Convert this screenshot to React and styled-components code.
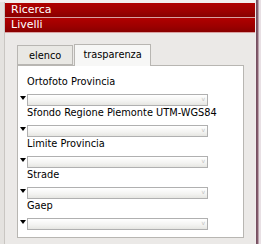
import React from 'react'
import styled, { createGlobalStyle } from 'styled-components'

const Global = createGlobalStyle`
  body {
    margin: 0;
    background: #f2eeee;
    font-family: "DejaVu Sans", Verdana, sans-serif;
  }
`

const Frame = styled.div`
  width: 261px;
  height: 244px;
  display: flex;
  overflow: hidden;
`

const Side = styled.div`
  width: 5px;
  background: #e4e2df;
  border-right: 1px solid #c9c6c2;
  box-sizing: border-box;
  margin-top: 2px;
`

const Panel = styled.div`
  width: 250px;
  display: flex;
  flex-direction: column;
  padding-top: 3px;
`

const Bar = styled.div`
  height: 14px;
  line-height: 14px;
  padding-left: 6px;
  color: #fff;
  font-size: 11px;
  background: linear-gradient(#b00000, #9c0000 60%, #880000);
  border-bottom: 1px solid #d9a0a0;
  &:last-of-type { height: 13px; line-height: 13px; }
`

const Content = styled.div`
  flex: 1;
  background: #ebe9e7;
  padding: 11px 11px 0 12px;
`

const Tabs = styled.div`
  display: flex;
  align-items: flex-end;
  height: 21px;
  gap: 1px;
`

const Tab = styled.div`
  box-sizing: border-box;
  height: ${p => (p.active ? '22px' : '20px')};
  padding: 0 ${p => (p.active ? '8px' : '11px')};
  line-height: ${p => (p.active ? '20px' : '19px')};
  font-size: 9.8px;
  color: #000;
  background: ${p => (p.active ? '#f7f7f6' : '#e9e8e4')};
  border: 1px solid #b8b6b2;
  border-bottom: ${p => (p.active ? 'none' : '1px solid #b8b6b2')};
  margin-bottom: ${p => (p.active ? '-1px' : '0')};
  position: relative;
`

const Body = styled.div`
  background: #fff;
  border: 1px solid #b8b6b2;
  height: 173px;
  box-sizing: border-box;
  padding: 9px 0 0 2px;
`

const Item = styled.div`
  height: 31px;
`

const Label = styled.div`
  font-size: 9.8px;
  color: #000;
  padding-left: 7px;
  height: 19px;
  line-height: 14px;
`

const Row = styled.div`
  display: flex;
  align-items: center;
`

const Arrow = styled.div`
  width: 0;
  height: 0;
  border-left: 3px solid transparent;
  border-right: 3px solid transparent;
  border-top: 4px solid #000;
  margin-right: 1px;
  margin-top: -4px;
`

const Track = styled.div`
  width: 181px;
  height: 12px;
  box-sizing: border-box;
  border: 1px solid #b0b0b0;
  background: linear-gradient(#ffffff, #f3f3f1 60%, #e6e6e2);
  position: relative;
`

const Knob = styled.span`
  position: absolute;
  right: 2px;
  top: 1px;
  font-size: 6px;
  color: #c0c0c0;
  line-height: 6px;
`

const Strip = styled.div`
  width: 6px;
  background: linear-gradient(90deg, #f0ecec 0, #f0ecec 1px, #6e4a5c 1px, #8a6070 3px, #e8e0e4 4px);
`

const layers = [
  'Ortofoto Provincia',
  'Sfondo Regione Piemonte UTM-WGS84',
  'Limite Provincia',
  'Strade',
  'Gaep',
]

export default function App() {
  return (
    <>
      <Global />
      <Frame>
        <Side />
        <Panel>
          <Bar>Ricerca</Bar>
          <Bar>Livelli</Bar>
          <Content>
            <Tabs>
              <Tab>elenco</Tab>
              <Tab active>trasparenza</Tab>
            </Tabs>
            <Body>
              {layers.map(name => (
                <Item key={name}>
                  <Label>{name}</Label>
                  <Row>
                    <Arrow />
                    <Track>
                      <Knob>v</Knob>
                    </Track>
                  </Row>
                </Item>
              ))}
            </Body>
          </Content>
        </Panel>
        <Strip />
      </Frame>
    </>
  )
}
